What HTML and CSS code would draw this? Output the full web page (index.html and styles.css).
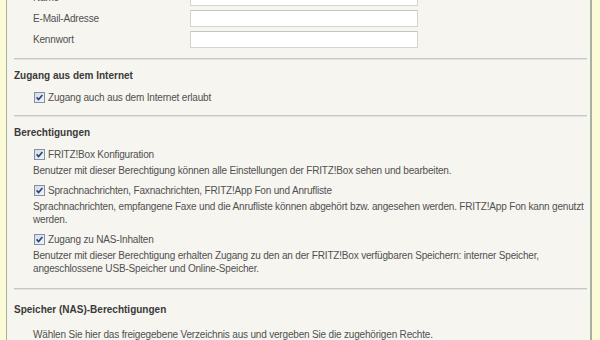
FILE: index.html
```html
<!DOCTYPE html>
<html lang="de">
<head>
    <meta charset="UTF-8">
    <title>Benutzer</title>
    <link rel="stylesheet" href="styles.css">
</head>
<body>
    <div class="page">
        <div class="form-fields">
            <div class="form-row">
                <label for="name">Name</label>
                <input type="text" id="name">
            </div>
            <div class="form-row">
                <label for="email">E-Mail-Adresse</label>
                <input type="text" id="email">
            </div>
            <div class="form-row">
                <label for="password">Kennwort</label>
                <input type="password" id="password">
            </div>
        </div>

        <hr class="separator">

        <div class="section">
            <h3>Zugang aus dem Internet</h3>
            <div class="options">
                <div class="check-row">
                    <span class="checkbox"><svg width="9" height="9" viewBox="0 0 9 9"><path d="M1.6 4.4 L3.6 6.6 L7.4 2" fill="none" stroke="#2b3f86" stroke-width="1.6"/></svg></span>
                    Zugang auch aus dem Internet erlaubt
                </div>
            </div>
        </div>

        <hr class="separator">

        <div class="section perm-section">
            <h3>Berechtigungen</h3>
            <div class="options">
                <div class="check-row">
                    <span class="checkbox"><svg width="9" height="9" viewBox="0 0 9 9"><path d="M1.6 4.4 L3.6 6.6 L7.4 2" fill="none" stroke="#2b3f86" stroke-width="1.6"/></svg></span>
                    FRITZ!Box Konfiguration
                </div>
                <p class="desc">Benutzer mit dieser Berechtigung können alle Einstellungen der FRITZ!Box sehen und bearbeiten.</p>
                <div class="check-row">
                    <span class="checkbox"><svg width="9" height="9" viewBox="0 0 9 9"><path d="M1.6 4.4 L3.6 6.6 L7.4 2" fill="none" stroke="#2b3f86" stroke-width="1.6"/></svg></span>
                    Sprachnachrichten, Faxnachrichten, FRITZ!App Fon und Anrufliste
                </div>
                <p class="desc">Sprachnachrichten, empfangene Faxe und die Anrufliste können abgehört bzw. angesehen werden. FRITZ!App Fon kann genutzt werden.</p>
                <div class="check-row">
                    <span class="checkbox"><svg width="9" height="9" viewBox="0 0 9 9"><path d="M1.6 4.4 L3.6 6.6 L7.4 2" fill="none" stroke="#2b3f86" stroke-width="1.6"/></svg></span>
                    Zugang zu NAS-Inhalten
                </div>
                <p class="desc">Benutzer mit dieser Berechtigung erhalten Zugang zu den an der FRITZ!Box verfügbaren Speichern: interner Speicher, angeschlossene USB-Speicher und Online-Speicher.</p>
            </div>
        </div>

        <hr class="separator">

        <div class="section">
            <h3 class="last-heading">Speicher (NAS)-Berechtigungen</h3>
            <div class="options">
                <p class="intro">Wählen Sie hier das freigegebene Verzeichnis aus und vergeben Sie die zugehörigen Rechte.</p>
            </div>
        </div>
    </div>
</body>
</html>
```

FILE: styles.css
```css
html, body {
    margin: 0;
    padding: 0;
    height: 100%;
    overflow: hidden;
}
body {
    font-family: "Liberation Sans", Arial, sans-serif;
    font-size: 10px;
    letter-spacing: -0.18px;
    color: #505050;
    background-color: #fbfbd8;
}
.page {
    margin-left: 6px;
    width: 583px;
    min-height: 100%;
    background-color: #f7f5f0;
    border-left: 1px solid #a8b0a0;
    border-right: 2px solid #a8b0a0;
}
.form-fields {
    margin-top: -13px;
    padding-left: 26px;
}
.form-row {
    display: flex;
    align-items: center;
    height: 21px;
}
.form-row label {
    width: 157px;
}
.form-row input {
    width: 228px;
    height: 17px;
    box-sizing: border-box;
    margin: 0;
    padding: 0 3px;
    background: #fff;
    border: 1px solid #d4d4d0;
    border-top-color: #c4c4c0;
}
.separator {
    margin: 8px 3px 0 7px;
    height: 0;
    border: none;
    border-top: 1px solid #c6c6c2;
    border-bottom: 1px solid #e4e4e0;
}
.section {
    padding-left: 7px;
    padding-bottom: 1px;
}
.perm-section {
    padding-bottom: 4px;
}
.section h3 {
    margin: 8px 0 0;
    font-size: 10px;
    letter-spacing: 0;
    line-height: 16px;
    color: #3a3a3a;
}
.section .last-heading {
    margin-top: 12px;
}
.options {
    padding-left: 19px;
}
.check-row {
    display: flex;
    align-items: center;
    height: 18px;
    margin-top: 4px;
}
.checkbox {
    width: 9px;
    height: 9px;
    margin: 0 3px 0 1px;
    border: 1px solid #7f93a6;
    background: linear-gradient(135deg, #d6dae2, #f4f4f6);
    display: flex;
    align-items: center;
    justify-content: center;
}
.desc {
    margin: 1px 0 1px;
    line-height: 13px;
}
.intro {
    margin: 10px 0 0;
    line-height: 13px;
}
```
